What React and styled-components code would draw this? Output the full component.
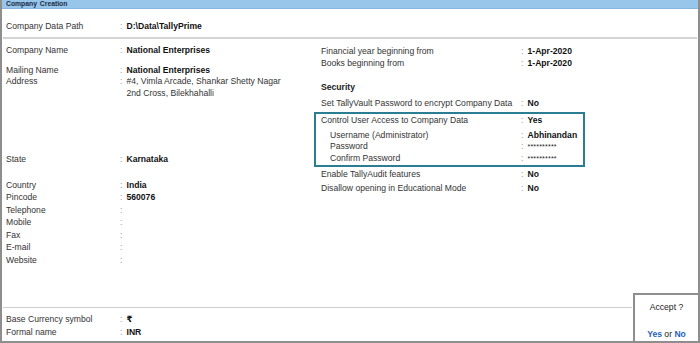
import React from 'react';
import styled, { createGlobalStyle } from 'styled-components';

const Global = createGlobalStyle`
  html, body { margin: 0; padding: 0; background: #fff; overflow: hidden; }
  body { font-family: "Liberation Sans", Arial, "DejaVu Sans", sans-serif; }
`;

const Frame = styled.div`
  box-sizing: border-box;
  width: 700px;
  height: 343px;
  display: flex;
  flex-direction: column;
  border-left: 2px solid #8e8e8e;
  border-right: 2px solid #8e8e8e;
  border-bottom: 2px solid #8e8e8e;
  font-size: 8.6px;
  color: #333;
  background: #fff;
`;

const TitleBar = styled.div`
  box-sizing: border-box;
  height: 9px;
  background: #98c5ea;
  border-bottom: 1px solid #86b6e0;
  padding-left: 4px;
  font-size: 6.8px;
  line-height: 8px;
  font-weight: bold;
  color: #1b2b48;
  word-spacing: 1px;
`;

const PathSection = styled.div`
  padding: 10.75px 0 5px 4px;
`;

const Divider = styled.div`
  height: ${p => p.$thick}px;
  background: ${p => p.$color};
  margin: 0 1px;
`;

const Main = styled.div`
  flex: 1;
  display: flex;
`;

const LeftCol = styled.div`
  box-sizing: border-box;
  width: 312px;
  padding: 4.25px 0 0 4px;
`;

const RightCol = styled.div`
  box-sizing: border-box;
  width: 271px;
  padding: 5.75px 0 0 7px;
`;

const Row = styled.div`
  display: grid;
  grid-template-columns: ${p => p.$labelW}px 7.5px 1fr;
  line-height: ${p => p.$lh || 12.5}px;
  margin-top: ${p => p.$mt || 0}px;
  white-space: nowrap;
`;

const Label = styled.span`
  padding-left: ${p => p.$indent || 0}px;
  color: #333;
`;

const Colon = styled.span`
  color: #9a9a9a;
  padding-left: 1px;
`;

const Value = styled.span`
  font-weight: bold;
  color: #111;
`;

const Plain = styled.span`
  color: #333;
`;

const Stars = styled.span`
  color: #222;
  font-size: 7px;
  letter-spacing: 0.2px;
`;

const Heading = styled.div`
  font-weight: bold;
  color: #222;
  line-height: 12px;
  margin-top: ${p => p.$mt}px;
`;

const AccessBox = styled.div`
  box-sizing: border-box;
  width: 271px;
  margin: 3px 0 0 -7px;
  padding: 0 0 1px 5px;
  border: 2px solid #2a7d93;
`;

const Footer = styled.div`
  height: 48px;
  display: flex;
  align-items: flex-end;
`;

const FooterLeft = styled.div`
  flex: 1;
  padding-bottom: 2.75px;
`;

const FooterRows = styled.div`
  padding: 5.25px 0 0 4px;
`;

const AcceptBox = styled.div`
  box-sizing: border-box;
  width: 65px;
  height: 48px;
  border-top: 2px solid #8e8e8e;
  border-left: 2px solid #8e8e8e;
  display: flex;
  flex-direction: column;
  align-items: center;
  justify-content: space-between;
  padding: 6px 0 1px;
  line-height: 12px;
  color: #222;
`;

const Choice = styled.span`
  font-weight: bold;
  color: #1f5fb5;
`;

const L = 113;
const R = 199;

function LRow({ label, value, mt, lh, plain, indent, w = L, children }) {
  return (
    <Row $labelW={w} $mt={mt} $lh={lh}>
      <Label $indent={indent}>{label}</Label>
      <Colon>:</Colon>
      {children ? children : plain ? <Plain>{value}</Plain> : <Value>{value}</Value>}
    </Row>
  );
}

export default function App() {
  return (
    <>
      <Global />
      <Frame>
        <TitleBar>Company Creation</TitleBar>
        <PathSection>
          <LRow label="Company Data Path" value="D:\Data\TallyPrime" />
        </PathSection>
        <Divider $thick={2} $color="#d3d3d3" />
        <Main>
          <LeftCol>
            <LRow label="Company Name" value="National Enterprises" />
            <LRow label="Mailing Name" value="National Enterprises" mt={7.5} />
            <LRow label="Address" lh={11.5}>
              <Plain>
                #4, Vimla Arcade, Shankar Shetty Nagar
                <br />
                2nd Cross, Bilekhahalli
              </Plain>
            </LRow>
            <LRow label="State" value="Karnataka" mt={53.5} />
            <LRow label="Country" value="India" mt={13.5} />
            <LRow label="Pincode" value="560076" />
            <LRow label="Telephone" value="" />
            <LRow label="Mobile" value="" />
            <LRow label="Fax" value="" />
            <LRow label="E-mail" value="" />
            <LRow label="Website" value="" />
          </LeftCol>
          <RightCol>
            <LRow w={R} lh={12} label="Financial year beginning from" value="1-Apr-2020" />
            <LRow w={R} lh={12} label="Books beginning from" value="1-Apr-2020" />
            <Heading $mt={12.3}>Security</Heading>
            <LRow w={R} lh={12} mt={4} label="Set TallyVault Password to encrypt Company Data" value="No" />
            <AccessBox>
              <LRow w={R} lh={12} label="Control User Access to Company Data" value="Yes" />
              <LRow w={R} lh={11.4} mt={3.7} indent={9} label="Username (Administrator)" value="Abhinandan" />
              <LRow w={R} lh={11.4} indent={9} label="Password">
                <Stars>**********</Stars>
              </LRow>
              <LRow w={R} lh={11.4} indent={9} label="Confirm Password">
                <Stars>**********</Stars>
              </LRow>
            </AccessBox>
            <LRow w={R} lh={12} mt={0.8} label="Enable TallyAudit features" value="No" />
            <LRow w={R} lh={12} mt={2.3} label="Disallow opening in Educational Mode" value="No" />
          </RightCol>
        </Main>
        <Footer>
          <FooterLeft>
            <Divider $thick={1} $color="#cfcfcf" />
            <FooterRows>
              <LRow label="Base Currency symbol" value="₹" />
              <LRow label="Formal name" value="INR" />
            </FooterRows>
          </FooterLeft>
          <AcceptBox>
            <span>Accept ?</span>
            <span>
              <Choice>Yes</Choice> or <Choice>No</Choice>
            </span>
          </AcceptBox>
        </Footer>
      </Frame>
    </>
  );
}
